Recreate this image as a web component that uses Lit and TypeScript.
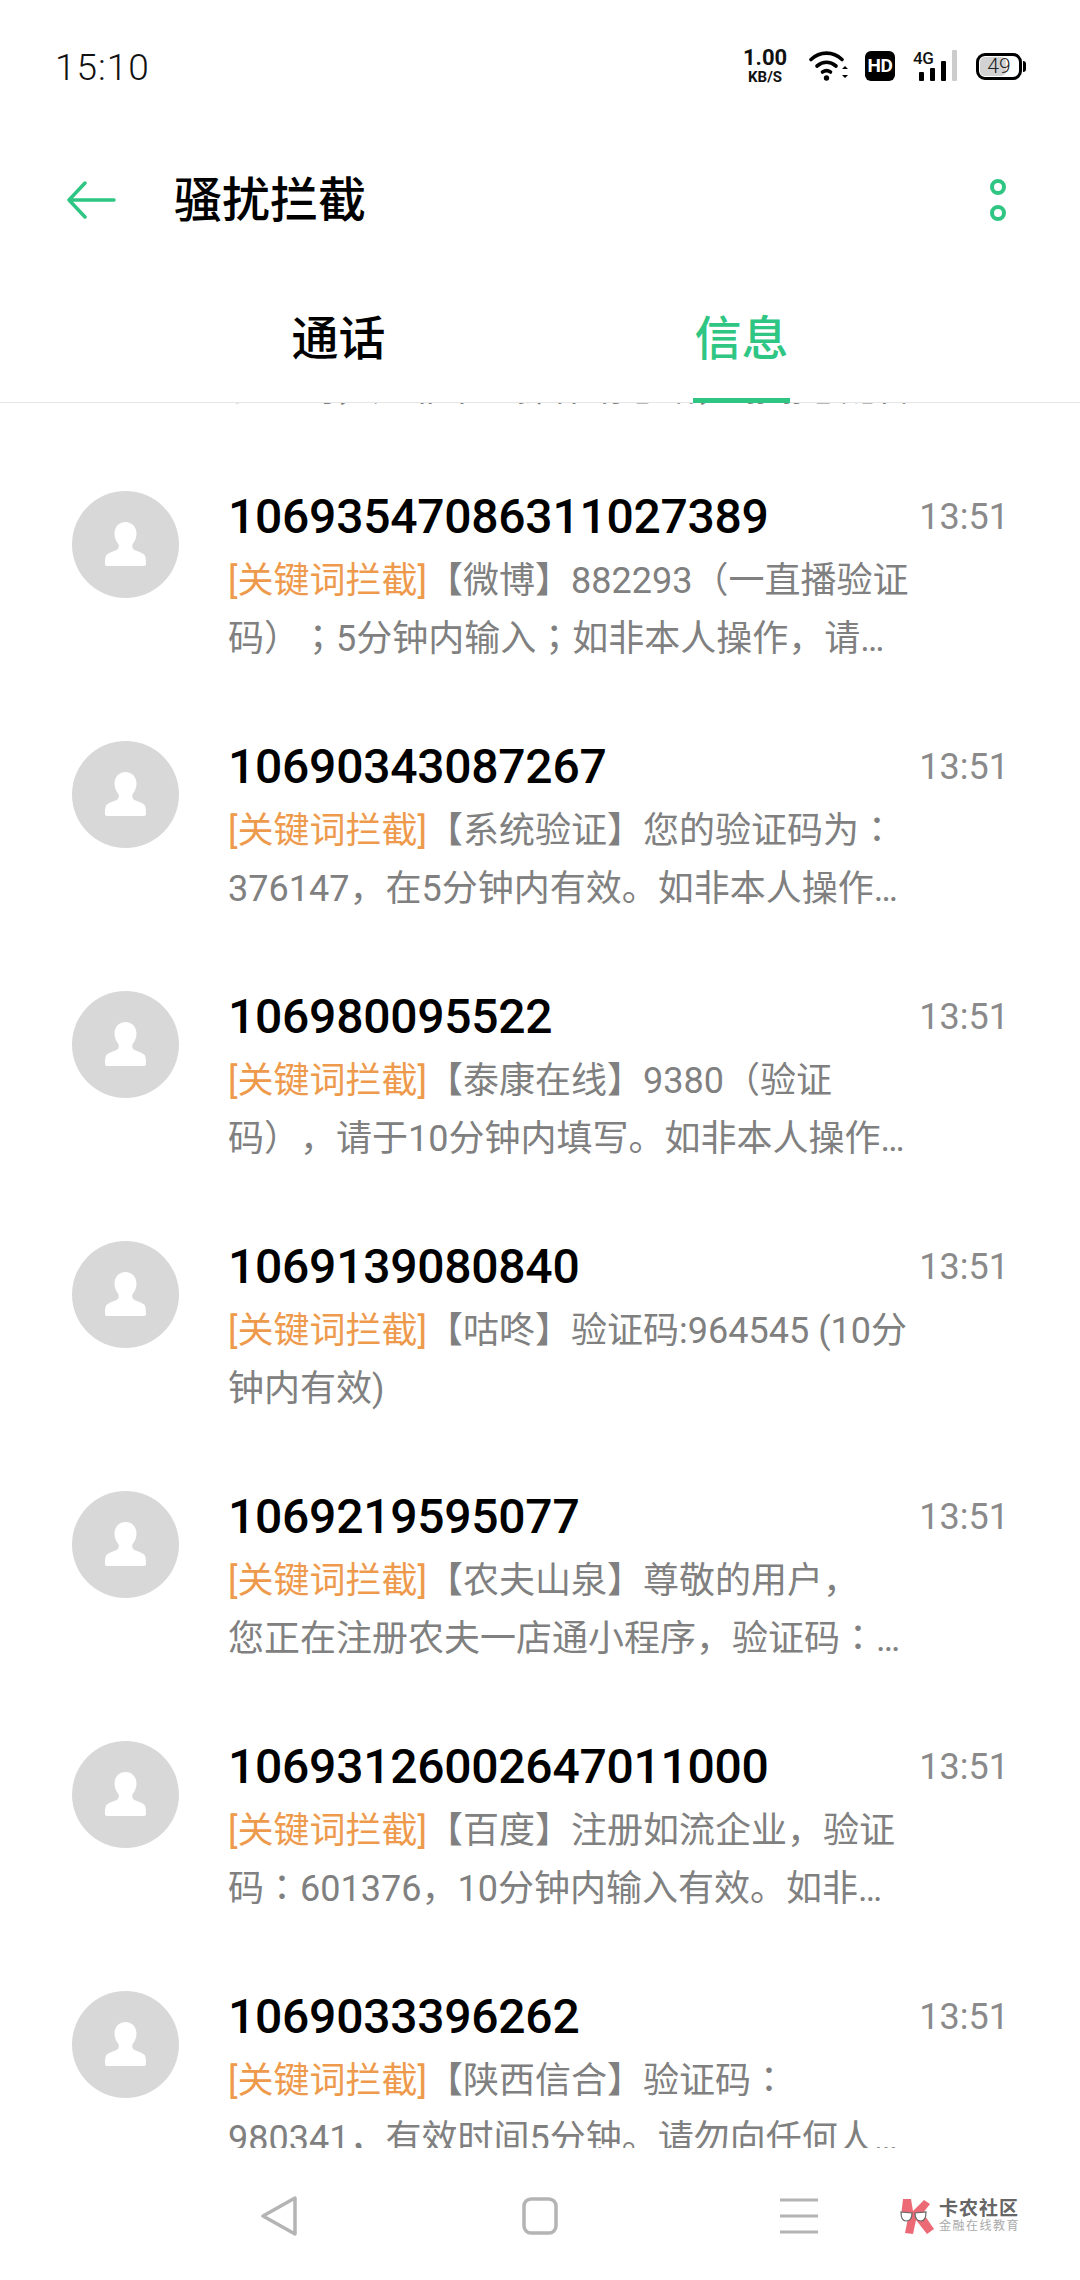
import { LitElement, html, css, svg } from "lit";
import { customElement } from "lit/decorators.js";

const tail = "验证码，如非本人操作请忽略，谢谢您配合";
const rows = [
  ["1069354708631 1027389".replace(" ", ""), "【微博】882293（一直播验证", "码）；5分钟内输入；如非本人操作，请…"],
  ["10690343087267", "【系统验证】您的验证码为：", "376147，在5分钟内有效。如非本人操作…"],
  ["106980095522", "【泰康在线】9380（验证", "码），请于10分钟内填写。如非本人操作…"],
  ["1069139080840", "【咕咚】验证码:964545 (10分", "钟内有效)"],
  ["1069219595077", "【农夫山泉】尊敬的用户，", "您正在注册农夫一店通小程序，验证码：…"],
  ["1069312600264701 1000".replace(" ", ""), "【百度】注册如流企业，验证", "码：601376，10分钟内输入有效。如非…"],
  ["1069033396262", "【陕西信合】验证码：", "980341，有效时间5分钟。请勿向任何人…"],
];

/* The reference centres full-width colons and semicolons in their cell. */
const fmt = (text: string) =>
  text.split(/([：；])/).map((part) => (part === "：" || part === "；" ? html`<span class="mid">${part}</span>` : part));

@customElement("app-root")
export class AppRoot extends LitElement {
  static styles = css`
    :host {
      display: flex;
      flex-direction: column;
      width: 1080px;
      height: 2280px;
      background: #fff;
      overflow: hidden;
      font-family: Roboto, "Noto Sans CJK SC", sans-serif;
      color: #000;
      text-spacing-trim: space-all;
    }
    .status {
      height: 132px;
      display: flex;
      align-items: center;
      justify-content: space-between;
      padding: 0 54px 0 55px;
      box-sizing: border-box;
      flex: none;
    }
    .clock {
      font-size: 37px;
      font-weight: 300;
      letter-spacing: 1px;
      color: #111;
      line-height: 64px;
      padding-top: 3px;
    }
    .tray { display: flex; align-items: center; height: 40px; }
    .speed {
      display: flex;
      flex-direction: column;
      align-items: center;
      width: 46px;
      font-weight: 700;
      color: #111;
      margin-right: 21px;
    }
    .speed b { font-size: 22px; line-height: 22px; font-weight: 700; letter-spacing: 0; }
    .speed span { font-size: 15px; line-height: 15px; margin-top: 1px; }
    .hd {
      width: 30px;
      height: 30px;
      background: #000;
      border-radius: 6px;
      color: #fff;
      font: 700 19px/30px "Liberation Sans Narrow", Roboto, sans-serif;
      text-align: center;
      margin: 0 18px 0 17px;
      letter-spacing: -0.5px;
    }
    .sig { position: relative; width: 45px; height: 32px; margin-right: 18px; }
    .sig i {
      position: absolute;
      left: 0;
      top: -2px;
      font: 500 17px/20px Roboto, sans-serif;
      font-style: normal;
      letter-spacing: -0.5px;
      color: #111;
    }
    .sig svg { position: absolute; inset: 0; }
    .batt {
      position: relative;
      width: 46px;
      height: 27px;
      border: 3px solid #000;
      border-radius: 9px;
      box-sizing: border-box;
      font-size: 21px;
      font-weight: 300;
      text-align: center;
      line-height: 21px;
      color: #222;
      margin-right: 4px;
    }
    .batt::before {
      content: "";
      position: absolute;
      left: 1px;
      top: 1px;
      bottom: 1px;
      width: 26px;
      background: #d2d2d2;
      border-radius: 5px;
    }
    .batt span { position: relative; }
    .batt::after {
      content: "";
      position: absolute;
      right: -7px;
      top: 5px;
      width: 3px;
      height: 11px;
      background: #000;
      border-radius: 0 3px 3px 0;
    }
    .bar {
      height: 136px;
      flex: none;
      box-sizing: border-box;
      display: flex;
      align-items: center;
      padding: 0 74px 0 66px;
    }
    .title {
      font-size: 48px;
      font-weight: 500;
      margin-left: 58px;
      flex: 1;
      line-height: 60px;
      padding-top: 2px;
    }
    .tabs {
      flex: none;
      height: 130px;
      display: grid;
      grid-template-columns: 403px 403px;
      justify-content: center;
      box-sizing: border-box;
      padding: 41px 0 0 0;
      font-size: 47px;
      font-weight: 500;
      line-height: 60px;
      text-align: center;
    }
    .tabs .on { color: #2fc684; }
    .main { flex: 1; position: relative; min-height: 0; }
    .clip { position: absolute; inset: 4px 0 0; overflow: hidden; }
    .tail { margin: -42px 0 36px 228px; }
    .rule {
      position: absolute;
      left: 0;
      right: 0;
      top: 4px;
      height: 1px;
      background: #e6e6e6;
    }
    .ind {
      position: absolute;
      left: 693px;
      width: 97px;
      top: 0;
      height: 5px;
      background: #2fc684;
    }
    .row {
      height: 250px;
      display: flex;
      box-sizing: border-box;
      padding: 37px 71px 0 72px;
    }
    .avatar { width: 107px; height: 107px; flex: none; }
    .body { margin-left: 49px; flex: 1; min-width: 0; padding-top: 2px; }
    .top { display: flex; justify-content: space-between; height: 48px; }
    .name { font-size: 48px; font-weight: 500; line-height: 48px; letter-spacing: -0.25px; }
    .time { font-size: 36px; line-height: 48px; color: #8a8a8a; font-weight: 400; }
    .line {
      font-size: 36px;
      line-height: 58px;
      color: #808080;
      white-space: nowrap;
    }
    .first { margin-top: 11px; }
    .tag { color: #ee9a4c; }
    .mid { font-family: "Noto Sans CJK TC", sans-serif; line-height: 0; }
    .nav {
      flex: none;
      height: 132px;
      position: relative;
      display: flex;
      align-items: center;
      box-sizing: border-box;
      padding: 3px 0 0 260px;
    }
    .nav svg { display: block; flex: none; }
    .home { margin-left: 224px; }
    .menu { margin-left: 222px; }
    .brand {
      position: absolute;
      left: 900px;
      top: 50px;
      width: 120px;
      height: 36px;
      display: flex;
    }
    .brandtext { margin-left: 3px; }
    .brandtext b {
      display: block;
      font-size: 19px;
      line-height: 21px;
      font-weight: 700;
      color: #666;
      letter-spacing: 1px;
      white-space: nowrap;
    }
    .brandtext span {
      display: block;
      font-size: 12px;
      line-height: 14px;
      color: #aaa;
      letter-spacing: 1.500px;
      white-space: nowrap;
    }
  `;

  private avatar() {
    return svg`<svg class="avatar" viewBox="0 0 107 107">
      <circle cx="53.5" cy="53.5" r="53.5" fill="#d8d8d8"/>
      <path fill="#fff" d="M53.500 31c-6.500 0-11 5-11 11.500 0 4 1.500 7.500 3.500 10 1.500 2 1 5-1.500 6.500-3 1.500-7.500 2.500-9.500 4.500-1.500 1.500-2 4-2 9.500 0 1.200.8 2 2 2h37c1.200 0 2-.8 2-2 0-5.500-.5-8-2-9.500-2-2-6.500-3-9.500-4.500-2.500-1.500-3-4.500-1.500-6.500 2-2.500 3.500-6 3.500-10C64.500 36 60 31 53.500 31z"/>
    </svg>`;
  }

  render() {
    return html`
      <div class="status">
        <div class="clock">15:10</div>
        <div class="tray">
          <div class="speed"><b>1.00</b><span>KB/S</span></div>
          <svg width="39" height="32" viewBox="0 0 39 32" fill="none" stroke="#000" stroke-width="3.600" stroke-linecap="round">
            <path d="M2 9.500C11 1 24 1 33 9.500"/>
            <path d="M8 16c6-5 13-5 19 0"/>
            <path d="M13.500 22c3-2 5-2 8 0"/>
            <circle cx="17.500" cy="28" r="2.700" fill="#000" stroke="none"/>
            <path d="M33 19l3-3 3 3H33zM33 25h6l-3 3z" fill="#000" stroke="none"/>
          </svg>
          <div class="hd">HD</div>
          <div class="sig">
            <i>4G</i>
            <svg width="45" height="32" viewBox="0 0 45 32">
              <rect x="6" y="22" width="5" height="9" rx="1" fill="#000"/>
              <rect x="17" y="18" width="5" height="13" rx="1" fill="#000"/>
              <rect x="28" y="11" width="5" height="20" rx="1" fill="#000"/>
              <rect x="39" y="0" width="5" height="31" rx="1" fill="#ccc"/>
            </svg>
          </div>
          <div class="batt"><span>49</span></div>
        </div>
      </div>
      <div class="bar">
        <svg width="50" height="38" viewBox="0 0 50 38" fill="none" stroke="#2fc684" stroke-width="3.500" stroke-linecap="round" stroke-linejoin="round">
          <path d="M48 19H3M19 2L3 19l16 17"/>
        </svg>
        <div class="title">骚扰拦截</div>
        <svg width="16" height="42" viewBox="0 0 16 42" fill="none" stroke="#2fc684" stroke-width="4">
          <circle cx="8" cy="8" r="6"/>
          <circle cx="8" cy="34" r="6"/>
        </svg>
      </div>
      <div class="tabs"><div>通话</div><div class="on">信息</div></div>
      <div class="main">
        <div class="clip">
          <div class="line tail">${tail}</div>
          ${rows.map(
            (r) => html`<div class="row">
              ${this.avatar()}
              <div class="body">
                <div class="top">
                  <div class="name">${r[0]}</div>
                  <div class="time">13:51</div>
                </div>
                <div class="line first"><span class="tag">[关键词拦截]</span>${fmt(r[1])}</div>
                <div class="line">${fmt(r[2])}</div>
              </div>
            </div>`
          )}
        </div>
        <div class="rule"></div>
        <div class="ind"></div>
      </div>
      <div class="nav">
        <svg width="38" height="40" viewBox="0 0 38 40" fill="none" stroke="#b4b4b4" stroke-width="3.500" stroke-linejoin="round">
          <path d="M35 2v36L3 20z"/>
        </svg>
        <svg class="home" width="36" height="38" viewBox="0 0 36 38" fill="none" stroke="#b4b4b4" stroke-width="3.500">
          <rect x="2" y="2" width="32" height="34" rx="7"/>
        </svg>
        <svg class="menu" width="38" height="36" viewBox="0 0 38 36" stroke="#b4b4b4" stroke-width="3">
          <path d="M0 2h38M0 18h38M0 34h38"/>
        </svg>
        <div class="brand">
          <svg width="36" height="36" viewBox="0 0 36 36">
            <path fill="#ec6a75" d="M3 1h8l2 12L24 2l6 4-7 9 11 16-7 5-11-14-3 14-8-1 3-15-7-2z"/>
            <path fill="#fff" stroke="#666" stroke-width="1.200" d="M1 14l11 1c0 5-2 8-6 8s-5-4-5-9zM15 15l11-1c0 5-1 9-5 9s-6-3-6-8z"/>
          </svg>
          <div class="brandtext"><b>卡农社区</b><span>金融在线教育</span></div>
        </div>
      </div>
    `;
  }
}
